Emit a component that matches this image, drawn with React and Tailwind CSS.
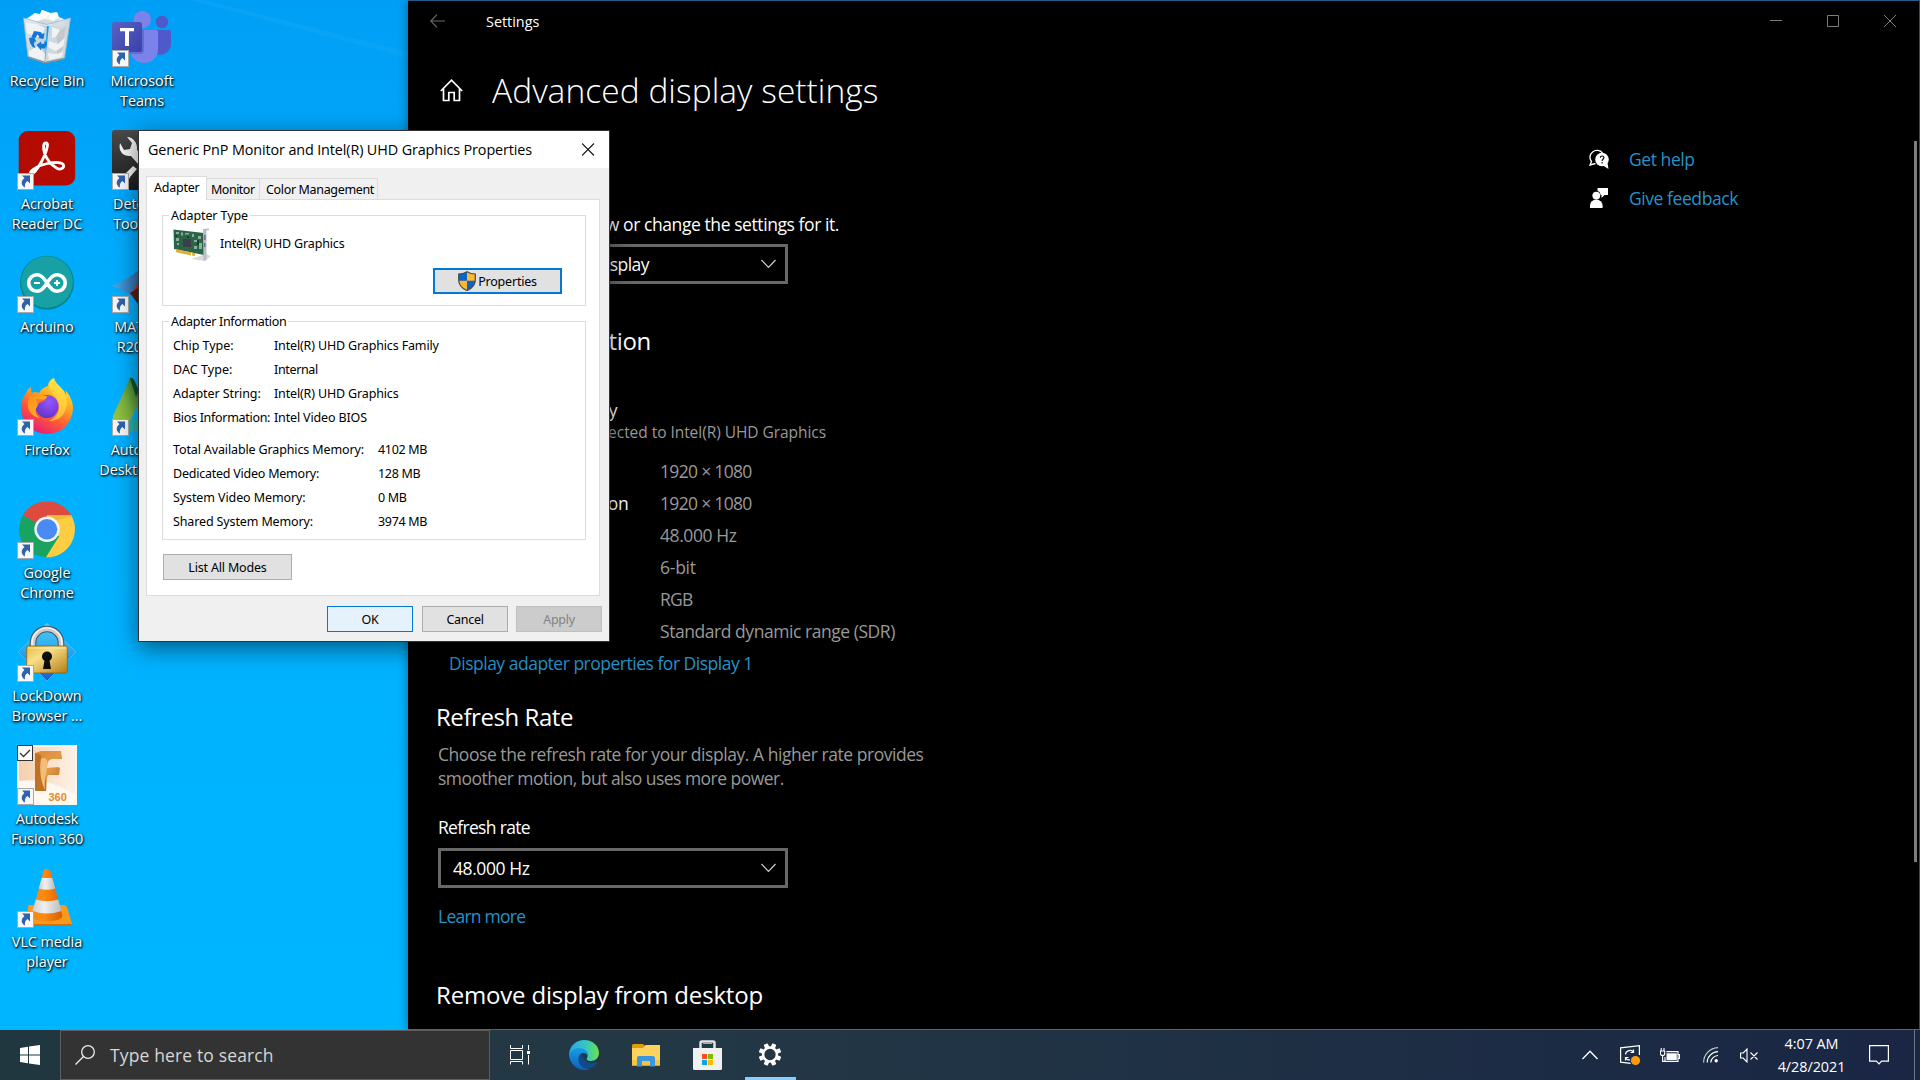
import React from "react";

/* ---------- desktop icon artwork (60 x 60) ---------- */

function Art({ children }) {
  return (
    <svg width="60" height="60" viewBox="0 0 60 60" className="block">
      {children}
    </svg>
  );
}

function RecycleBinArt() {
  return (
    <Art>
      <defs>
        <linearGradient id="binL" x1="0" y1="0" x2="1" y2="1">
          <stop offset="0" stopColor="#e9eef2" />
          <stop offset="1" stopColor="#c3c8cc" />
        </linearGradient>
      </defs>
      <path d="M9 12l9-6 5 1 2-4 8 3 7-1 2 5 7 3-3 6H13z" fill="#f2f2f2" />
      <path d="M18 6l7 5-6 4-8-3zM25 3l8 3-5 6-5-4zM34 7l7-1-4 8-5-3z" fill="#fff" />
      <path d="M19 15l9-3 8 2 7-3-3 6H20z" fill="#d6d8da" />
      <path d="M6.5 11l23.500 7L28 55l-17-5.500z" fill="url(#binL)" opacity=".94" />
      <path d="M53.500 11L32 18l-4 37 19.500-4z" fill="#d8dbde" opacity=".95" />
      <path d="M9 16l10 1 9 4-4 10-14-5z" fill="#f7f9fa" opacity=".8" />
      <path d="M12 44l9-5 7 8-1 7-15-5z" fill="#fbfbfb" opacity=".8" />
      <path d="M35 20l8 3 6-4-5 9-9 3zM32 34l9 3 7-6-2 9-8 4-7-4zM31 46l8 1 7-4-1 7-13 3z" fill="#f3f3f3" opacity=".95" />
      <path d="M43 23l6-4-2 12-6 6-2-7zM40 44l6-5-1 6-5 2z" fill="#c4c8cb" />
      <path d="M6.500 11L30 17.500 53.500 11" fill="none" stroke="#8fc3e6" strokeWidth=".9" />
      <path d="M6.500 11l4.500 39 17 5.500L47.500 51l6-40" fill="none" stroke="#9fb6c4" strokeWidth=".8" />
      <path d="M11 49.500l17 5.500 19.500-4v1.500L28 56.500 11 51z" fill="#8d9296" />
      <g fill="#1479d6">
        <path d="M14.500 30l2.500-6 6.500 1 2 2 2-1-1 6-5.500-1 1.500-1-2-2.500-2.500 4z" />
        <path d="M12 31l5-1 2.500 5-2-.5-.5 3 1.500 3.500-3-1-2.500-4z" />
        <path d="M19.500 38l4.500-3.500v2l3 .500 1-4 2 4-2 4.500-4 0v2z" />
      </g>
    </Art>
  );
}

function TeamsArt() {
  return (
    <Art>
      <defs>
        <linearGradient id="tmBox" x1="0" y1="0" x2="1" y2="1">
          <stop offset="0" stopColor="#5a62c3" />
          <stop offset="1" stopColor="#3940ab" />
        </linearGradient>
      </defs>
      <circle cx="50" cy="15" r="6.200" fill="#5059c9" />
      <path d="M44 23h13a2 2 0 0 1 2 2v12a11 11 0 0 1-15 10z" fill="#5059c9" />
      <circle cx="30.300" cy="12.500" r="8.700" fill="#7b83eb" />
      <path d="M18 23h26a2 2 0 0 1 2 2v17a14 14 0 0 1-28 0z" fill="#7b83eb" />
      <path d="M18 23h14v20a4 4 0 0 1-4 4H18z" fill="#4a50a8" opacity=".45" />
      <rect x="0" y="15" width="30" height="30" rx="2.500" fill="url(#tmBox)" />
      <path d="M8 21h14v3.300h-5V39h-4V24.300H8z" fill="#fff" />
    </Art>
  );
}

function AcrobatArt() {
  return (
    <Art>
      <rect x="1.700" y="1" width="56.500" height="54.500" rx="9" fill="#b30b00" />
      <path
        d="M29 13c-3 0-3 5-1.500 10 2 6 7 12 12 15 4 2.500 8 0 7-3-1-3-9-3-16-1.500-7 1.500-14 5-16.500 8-2 3 1 4 4 0 4-5 9-14 11-20 1.500-5 2.500-8.500 0-8.500z"
        fill="none"
        stroke="#fff"
        strokeWidth="2.800"
        strokeLinejoin="round"
      />
    </Art>
  );
}

function WrenchArt() {
  return (
    <Art>
      <defs>
        <linearGradient id="wr" x1="0" y1="0" x2="0" y2="1">
          <stop offset="0" stopColor="#4a4a4a" />
          <stop offset="1" stopColor="#1c1c1c" />
        </linearGradient>
      </defs>
      <rect x="0" y="0" width="60" height="60" rx="3" fill="url(#wr)" />
      <path d="M8 13c-2 8 3 14 11 13l22 25 6-6-22-25c1-7-4-13-10-13l5 6-2 6-6 1z" fill="#f4f4f4" />
      <path d="M14 43l7-7 4 3-7 8c-1 3-3 4-5 4l-2-2c0-3 1-5 3-6z" fill="#f4f4f4" />
    </Art>
  );
}

function ArduinoArt() {
  return (
    <Art>
      <circle cx="30" cy="29.700" r="27" fill="#00878f" />
      <circle cx="30" cy="29" r="25.800" fill="#17a1a5" />
      <path
        d="M30 30c-3-5-6-8.300-10-8.300a8.300 8.300 0 0 0 0 16.600c4 0 7-3.300 10-8.300s6-8.300 10-8.300a8.300 8.300 0 0 1 0 16.600c-4 0-7-3.300-10-8.300z"
        fill="none"
        stroke="#fff"
        strokeWidth="3.600"
      />
      <path d="M17 30h6M37 30h6M40 27v6" stroke="#fff" strokeWidth="1.800" />
    </Art>
  );
}

function MatlabArt() {
  return (
    <Art>
      <defs>
        <linearGradient id="ml" x1="0" y1="0" x2="1" y2="0">
          <stop offset="0" stopColor="#4aa9e8" />
          <stop offset="1" stopColor="#2b5f9e" />
        </linearGradient>
        <linearGradient id="mr" x1="0" y1="0" x2="0" y2="1">
          <stop offset="0" stopColor="#6b1a1f" />
          <stop offset=".6" stopColor="#c0392b" />
          <stop offset="1" stopColor="#f6a21b" />
        </linearGradient>
      </defs>
      <path d="M0 33l19-10 8-6 5 14-13 11z" fill="url(#ml)" />
      <path d="M18 40c6-3 8-14 14-25 4-7 8-8 12 4l14 30c-8-6-14-4-22 8-4-6-9-12-18-17z" fill="url(#mr)" />
      <path d="M18 40l8-5v16z" fill="#5d1a1d" />
    </Art>
  );
}

function FirefoxArt() {
  return (
    <Art>
      <defs>
        <linearGradient id="ffA" x1=".8" y1="0" x2=".25" y2="1">
          <stop offset="0" stopColor="#fff44f" />
          <stop offset=".35" stopColor="#ffab1f" />
          <stop offset=".65" stopColor="#ff5a36" />
          <stop offset="1" stopColor="#e5147f" />
        </linearGradient>
        <radialGradient id="ffB" cx=".6" cy=".3" r=".8">
          <stop offset="0" stopColor="#9059ff" />
          <stop offset=".6" stopColor="#7a3bdc" />
          <stop offset="1" stopColor="#4a3fb8" />
        </radialGradient>
        <linearGradient id="ffC" x1="0" y1="0" x2="1" y2="1">
          <stop offset="0" stopColor="#ff8a16" />
          <stop offset="1" stopColor="#ffbd2e" />
        </linearGradient>
      </defs>
      <path
        d="M31 10C31 6 34 3 37 2c1 5 5 7 8 11 2 1 3 4 4 6 0-2 0-3-1-5 5 5 8 12 8 18a26 26 0 0 1-52 0c0-7 3-12 5-15 1-3 3-5 5-6 0 2 0 4 1 6 2-1 5-1 7 0 2-4 5-6 9-7z"
        fill="url(#ffA)"
      />
      <path d="M37 2c1 5 5 7 8 11 6 8 6 16 3 22-3 7-9 10-16 10 9-4 12-12 9-20-2-5-7-8-9-13 0-4 2-8 5-10z" fill="#ffe14a" opacity=".65" />
      <circle cx="30" cy="30.500" r="11.500" fill="url(#ffB)" />
      <path d="M15 17c3-1 6-1 8 1 3 2 5 2 7 2 0 3-3 4-6 5-3 2-3 4-4 6-3 3-1 9 3 11-9-1-13-9-12-16 0-4 2-7 4-9z" fill="url(#ffC)" />
      <path d="M19 23c3 0 7 0 10 1-2 2-6 2-9 5z" fill="#ff6a28" opacity=".7" />
    </Art>
  );
}

function AutodeskArt() {
  return (
    <Art>
      <defs>
        <linearGradient id="ad" x1="1" y1="0" x2="0" y2="1">
          <stop offset="0" stopColor="#1d6b35" />
          <stop offset=".5" stopColor="#7cb342" />
          <stop offset="1" stopColor="#a6ce39" />
        </linearGradient>
      </defs>
      <path d="M18 2q2-1 4 2l8 16L13 56 1 50V40z" fill="url(#ad)" />
      <path d="M18 2q2-1 4 2l5 11-3 6z" fill="#12502c" />
      <path d="M14 44h20l10 12H16z" fill="#25b3ad" />
    </Art>
  );
}

function ChromeArt() {
  return (
    <Art>
      <path d="M30 30.300L5.800 16.300A28 28 0 0 1 54.200 16.300z" fill="#dd4b3e" />
      <path d="M30 30.300V16.300h24.200A28 28 0 0 1 29 58.300z" fill="#ffcd41" />
      <path d="M30 30.300L42.100 37.300 29 58.300A28 28 0 0 1 5.800 16.300l12.100 21z" fill="#1aa260" />
      <path d="M5.800 16.300L18 37.300l12-7z" fill="#1aa260" />
      <path d="M30 16.300h24.200L55 18l-20 4z" fill="#d9a92a" opacity=".45" />
      <circle cx="30" cy="30.300" r="12.700" fill="#f4f4f4" />
      <circle cx="30" cy="30.300" r="10.300" fill="#4a8af4" />
    </Art>
  );
}

function LockArt() {
  return (
    <Art>
      <defs>
        <linearGradient id="ld" x1="0" y1="0" x2="0" y2="1">
          <stop offset="0" stopColor="#4fd0f7" />
          <stop offset=".5" stopColor="#2aa4ec" />
          <stop offset="1" stopColor="#1c5bd0" />
        </linearGradient>
        <linearGradient id="lb" x1="0" y1="0" x2="1" y2="1">
          <stop offset="0" stopColor="#e8b93a" />
          <stop offset=".35" stopColor="#f8e08a" />
          <stop offset="1" stopColor="#b47c14" />
        </linearGradient>
      </defs>
      <path d="M30 1l29 29-29 29L1 30z" fill="url(#ld)" stroke="#5bc8f5" strokeWidth=".6" />
      <path d="M16 26v-5a14 14 0 0 1 28 0v5" fill="none" stroke="#4b4f55" strokeWidth="6.500" />
      <path d="M16 26v-5a14 14 0 0 1 28 0v5" fill="none" stroke="#c9ced4" strokeWidth="4.500" />
      <path d="M15 26v-5a15 15 0 0 1 30 0v5" fill="none" stroke="#fff" strokeWidth="1.200" />
      <rect x="9.700" y="24" width="40.600" height="27" rx="2" fill="url(#lb)" stroke="#8a5f10" strokeWidth=".8" />
      <path d="M11 26h38" stroke="#fbeeb4" strokeWidth="1.200" />
      <circle cx="30" cy="34.500" r="5" fill="#0c0c0c" />
      <path d="M28 36h4l2 11h-8z" fill="#0c0c0c" />
    </Art>
  );
}

function FusionArt() {
  return (
    <Art>
      <defs>
        <linearGradient id="fb" x1="0" y1="0" x2="1" y2="0">
          <stop offset="0" stopColor="#f3cfae" />
          <stop offset="1" stopColor="#fdf1e6" />
        </linearGradient>
        <linearGradient id="ff" x1="0" y1="0" x2="1" y2="1">
          <stop offset="0" stopColor="#d98a3c" />
          <stop offset=".5" stopColor="#e39a45" />
          <stop offset="1" stopColor="#b8651c" />
        </linearGradient>
      </defs>
      <rect width="60" height="60" fill="#fdf6ef" />
      <rect x="2" y="2" width="56" height="56" fill="url(#fb)" />
      <path d="M2 36q30-4 56 14v8H2z" fill="#fff8f1" />
      <path d="M18 8l6-2h20l1 8-10 0c-4 1-5 4-5 9l11-1 2 1-1 7H31c-2 4-1 9-2 16H18z" fill="url(#ff)" />
      <path d="M18 8l6 2c0 12 6 10 5 36H18z" fill="#b8641e" opacity=".75" />
      <path d="M24 14c4-3 8 0 6 9-1 8-3 14-2 22-4-8-6-20-4-31z" fill="#f1bd78" />
      <text x="31.500" y="55.500" fontSize="11" fontFamily="Liberation Sans, sans-serif" fontWeight="bold" fill="#e28b2d">
        360
      </text>
    </Art>
  );
}

function VlcArt() {
  return (
    <Art>
      <defs>
        <linearGradient id="vo" x1="0" y1="0" x2="1" y2="0">
          <stop offset="0" stopColor="#f08a1c" />
          <stop offset=".4" stopColor="#ff8a10" />
          <stop offset="1" stopColor="#d95e00" />
        </linearGradient>
        <linearGradient id="vw" x1="0" y1="0" x2="1" y2="0">
          <stop offset="0" stopColor="#c9cdd0" />
          <stop offset=".4" stopColor="#f0f0f0" />
          <stop offset="1" stopColor="#b9bcbf" />
        </linearGradient>
      </defs>
      <path d="M12 37h36l2 2 5 17-1 2H10l-1-2 2-17z" fill="#fb9a1a" />
      <path d="M9.500 56h45.500l-.5 2H10z" fill="#d86f00" />
      <path d="M27 1.500q3-1.200 6 0L45.500 48q-1 5-15.500 5t-15.500-5z" fill="url(#vo)" />
      <path d="M24.700 10h10.600l3 10.500q-8.300 2.500-16.600 0z" fill="url(#vw)" />
      <path d="M18.700 31.500q11.300 3.500 22.600 0L44.500 43q-14.500 5-29 0z" fill="url(#vw)" />
    </Art>
  );
}

/* ---------- desktop shortcuts ---------- */

const COL1 = [
  { lines: ["Recycle Bin"], art: RecycleBinArt, plain: true },
  { lines: ["Acrobat", "Reader DC"], art: AcrobatArt },
  { lines: ["Arduino"], art: ArduinoArt },
  { lines: ["Firefox"], art: FirefoxArt },
  { lines: ["Google", "Chrome"], art: ChromeArt },
  { lines: ["LockDown", "Browser ..."], art: LockArt },
  { lines: ["Autodesk", "Fusion 360"], art: FusionArt, checked: true },
  { lines: ["VLC media", "player"], art: VlcArt },
];

const COL2 = [
  { lines: ["Microsoft", "Teams"], art: TeamsArt },
  { lines: ["Detector", "Tool Box"], art: WrenchArt },
  { lines: ["MATLAB", "R2020b"], art: MatlabArt },
  { lines: ["Autodesk", "Desktop App"], art: AutodeskArt },
];

function Shortcut({ item }) {
  const Pic = item.art;
  return (
    <div className="flex h-[123px] w-[94px] flex-col items-center">
      <div className="relative size-[60px]">
        <Pic />
        {!item.plain && (
          <svg className="absolute bottom-0 left-0" width="17" height="17" viewBox="0 0 17 17">
            <rect x=".5" y=".5" width="16" height="16" fill="#f7f7f7" stroke="#a9a9a9" />
            <path d="M5 2.500h8v8l-2.500-2.500C8 9.500 7.500 12 8 14.500 4 12.500 3.500 8 7.500 5z" fill="#2f62a8" />
          </svg>
        )}
        {item.checked && (
          <svg className="absolute left-0 top-0" width="16" height="16" viewBox="0 0 16 16">
            <rect x=".5" y=".5" width="15" height="15" fill="#fff" stroke="#333" />
            <path d="M3 8l3.500 3.500L13 5" fill="none" stroke="#333" strokeWidth="1.300" />
          </svg>
        )}
      </div>
      <div className="mt-1 text-center text-[14.4px] leading-5 tracking-[-0.05px] text-white [text-shadow:1px_1px_2px_#000,0_1px_3px_rgba(0,0,0,0.8)]">
        {item.lines.map((l) => (
          <div key={l} className="whitespace-nowrap">{l}</div>
        ))}
      </div>
    </div>
  );
}

/* ---------- settings window ---------- */

function Select({ children, className }) {
  return (
    <div className="flex h-10 w-[350px] items-center justify-between border-[3px] border-[#686868] pl-3 pr-[9px] text-[17.5px] leading-6 text-white">
      <span className={className}>{children}</span>
      <svg width="15" height="10" viewBox="0 0 15 10">
        <path d="M.5 1L7.500 8.300 14.500 1" fill="none" stroke="#cfcfcf" strokeWidth="1.200" />
      </svg>
    </div>
  );
}

const INFO = [
  ["Desktop resolution", "1920 × 1080", "tracking-[-0.68px]"],
  ["Active signal resolution", "1920 × 1080", "tracking-[-0.68px]"],
  ["Refresh rate (Hz)", "48.000 Hz", "tracking-[-0.42px]"],
  ["Bit depth", "6-bit", "tracking-[-0.25px]"],
  ["Color format", "RGB", "tracking-[-0.7px]"],
  ["Color space", "Standard dynamic range (SDR)", "tracking-[-0.45px]"],
];

function SettingsWindow() {
  return (
    <div className="absolute left-[408px] top-0 flex h-[1030px] w-[1512px] flex-col border-b border-r border-t border-b-[#1f7a93] border-r-[#2c4a7c] border-t-[#235a86] bg-black text-white shadow-[0_0_10px_rgba(0,0,0,0.4)]">
      <div className="flex h-10 shrink-0 items-center pl-[22px] pr-[23px]">
        <svg width="15" height="14" viewBox="0 0 15 14" fill="none" stroke="#6a6a6a" strokeWidth="1.100">
          <path d="M15 7H1M7 .700L.800 7 7 13.300" />
        </svg>
        <span className="ml-[41px] pt-0.5 text-[14.4px] leading-5">Settings</span>
        <svg className="ml-auto" width="127" height="14" viewBox="0 0 127 14" fill="none" stroke="#7c7c7c">
          <path d="M1 6.500h12M58.500 1.500h11v11h-11zM115 1l12 12M127 1l-12 12" />
        </svg>
      </div>

      <div className="flex min-h-0 flex-1">
        <div className="w-[560px] shrink-0 pl-7 pt-[25px] tracking-[-0.42px]">
          <div className="flex h-12 items-center">
            <svg className="ml-1" width="23" height="23" viewBox="0 0 23 23" fill="none" stroke="#fff" strokeWidth="1.700">
              <path d="M.800 12L11.500 1.200 22.200 12M3.500 9.500v12h5.300v-8h5.400v8h5.300v-12" />
            </svg>
            <h1 className="ml-[29px] whitespace-nowrap text-[33.5px] font-[350] leading-[48px] tracking-[0.05px]">Advanced display settings</h1>
          </div>
          <div className="ml-0.5">
            <div className="mt-[98px] w-[401px] whitespace-nowrap text-[17.5px] leading-6">
              <div className="flex justify-end">Select a display to view or change the settings for it.</div>
            </div>
            <div className="mt-2">
              <Select className="tracking-[-0.52px]">Display 1: Internal Display</Select>
            </div>
          </div>
          <h2 className="mt-[41px] flex w-[215px] justify-end whitespace-nowrap text-[24px] leading-8 tracking-[-0.3px]">Display information</h2>
          <div className="mt-[41px] flex w-[181px] justify-end whitespace-nowrap text-[17.5px] leading-6">Internal Display</div>
          <div className="flex w-[390px] justify-end whitespace-nowrap text-[15.5px] leading-5 tracking-[-0.05px] text-[#999]">
            Display 1: Connected to Intel(R) UHD Graphics
          </div>
          <div className="ml-[13px] mt-[13px] text-[17.5px] leading-8">
            {INFO.map(([k, v, t]) => (
              <div key={k} className="flex">
                <span className="w-[211px] whitespace-nowrap tracking-[-0.35px]">{k}</span>
                <span className={"whitespace-nowrap text-[#999] " + t}>{v}</span>
              </div>
            ))}
            <a className="block whitespace-nowrap tracking-[-0.49px] text-[#2593ca]">Display adapter properties for Display 1</a>
          </div>
          <h2 className="mt-[22px] text-[24px] leading-8 tracking-[-0.44px]">Refresh Rate</h2>
          <div className="ml-0.5 text-[17.5px] leading-6">
            <p className="mt-[9px] whitespace-nowrap text-[#999]">
              <span className="tracking-[-0.45px]">Choose the refresh rate for your display. A higher rate provides</span>
              <br />
              <span className="tracking-[-0.53px]">smoother motion, but also uses more power.</span>
            </p>
            <div className="mt-[25px] tracking-[-0.68px]">Refresh rate</div>
            <div className="mt-[9px]">
              <Select className="tracking-[-0.42px]">48.000 Hz</Select>
            </div>
            <a className="mt-4 block tracking-[-0.75px] text-[#2593ca]">Learn more</a>
          </div>
          <h2 className="mt-[51px] whitespace-nowrap text-[24px] leading-8 tracking-[-0.18px]">Remove display from desktop</h2>
        </div>

        <div className="ml-[621px] pt-[98px] text-[17.5px] tracking-[-0.43px] text-[#2593ca]">
          <div className="flex h-[39px] items-center gap-5">
            <svg width="20" height="20" viewBox="0 0 20 20">
              <path d="M6.500 14.500L1 16l1.500-3.500A7 6.800 0 1 1 13.500 4" fill="none" stroke="#fff" strokeWidth="1.300" />
              <circle cx="13" cy="10.500" r="6.800" fill="#fff" />
              <path d="M14 16.500l5.500 3.500-1-6z" fill="#fff" />
              <path d="M11.300 8.800c0-2.400 3.600-2.300 3.600-.2 0 1.600-1.800 1.700-1.800 3.300M13.100 13v1.400" fill="none" stroke="#000" strokeWidth="1.100" />
            </svg>
            <span className="whitespace-nowrap pt-0.5">Get help</span>
          </div>
          <div className="flex h-[39px] items-center gap-5">
            <svg width="20" height="20" viewBox="0 0 20 20" fill="#fff">
              <path d="M8.500 0h10.500v7h-3.500l-3 3V7h-.8a5 5 0 0 0-3.200-4.200z" />
              <circle cx="7.300" cy="7.600" r="3.900" />
              <path d="M1 20v-2.500a6.300 6 0 0 1 12.600 0V20z" />
            </svg>
            <span className="whitespace-nowrap pt-0.5">Give feedback</span>
          </div>
        </div>
        <div className="ml-auto mr-0.5 mt-[100px] h-[721px] w-[3px] shrink-0 bg-[#7d7d7d]" />
      </div>
    </div>
  );
}

/* ---------- adapter properties dialog ---------- */

function Button({ children, className }) {
  return (
    <button className={"flex h-[26px] items-center justify-center whitespace-nowrap " + className}>
      {children}
    </button>
  );
}

function Group({ title, className, titleClass, children }) {
  return (
    <div className={"ml-[15px] w-[424px] border border-[#dcdcdc] " + className}>
      <div className={"-mt-[9px] ml-1.5 h-[18px] w-fit bg-white px-0.5 leading-[18px] " + titleClass}>{title}</div>
      {children}
    </div>
  );
}

const ADAPTER = [
  ["Chip Type:", "Intel(R) UHD Graphics Family", "tracking-[-0.05px]", "tracking-[-0.15px]"],
  ["DAC Type:", "Internal", "tracking-[0.05px]", "tracking-[-0.35px]"],
  ["Adapter String:", "Intel(R) UHD Graphics", "tracking-[-0.08px]", "tracking-[-0.15px]"],
  ["Bios Information:", "Intel Video BIOS", "tracking-[-0.3px]", "tracking-[-0.15px]"],
];

const MEMORY = [
  ["Total Available Graphics Memory:", "4102 MB", "tracking-[-0.13px]"],
  ["Dedicated Video Memory:", "128 MB", "tracking-[-0.23px]"],
  ["System Video Memory:", "0 MB", "tracking-[-0.1px]"],
  ["Shared System Memory:", "3974 MB", "tracking-[-0.13px]"],
];

function GraphicsCard() {
  return (
    <svg width="38" height="34" viewBox="0 0 38 34">
      <path d="M18 31l15-5 5 2-6 5z" fill="#d9dcd9" />
      <path d="M.5 1.500L31 5v22L1 21z" fill="#2c6449" />
      <path d="M3 21.300l15 3v3.200l-15-3.300z" fill="#e0b13a" />
      <path d="M19 24.500l3 .7v3l-3-.6z" fill="#e0b13a" />
      <rect x="10" y="11" width="8" height="8" fill="#3b3f48" />
      <path d="M3 4h3v2H3zM8 4.500h2v3H8zM12 5h4v1.500h-4zM19 6h2v3h-2zM3 10h3v3H3zM4 15h2v2H4zM21 12h3v2h-3zM25 8h3v3h-3zM21 18h3v3h-3zM26 15h3v6h-3z" fill="#9fc4ae" opacity=".8" />
      <path d="M24 12h2v5h-2zM2 7.500h2v1.500H2zM14 8h2v2h-2z" fill="#173c2a" />
      <path d="M30 1l6-.5V2l-2.500.5V32l-3 .8z" fill="#b9bdc9" />
      <path d="M31 7h1.500v5H31zM31 15h1.500v4H31z" fill="#6f7482" />
    </svg>
  );
}

function Shield() {
  return (
    <svg width="18" height="20" viewBox="0 0 18 20">
      <path d="M9 .500C6.500 2 3.500 3 .700 3v6c0 5 3.500 8.500 8.300 10.500 4.800-2 8.300-5.500 8.300-10.500V3C14.500 3 11.500 2 9 .500z" fill="#fdb82c" />
      <path d="M9 .500C6.500 2 3.500 3 .700 3v6.800H9zM9 9.800h8.300C17 14.500 13.500 17.700 9 19.500z" fill="#0c63c8" />
      <path d="M9 .700C6.500 2.200 3.500 3 .700 3v6c0 5 3.500 8.500 8.300 10.500 4.800-2 8.300-5.500 8.300-10.500V3C14.500 3 11.500 2.200 9 .700z" fill="none" stroke="#4a4a4a" strokeWidth="1.200" />
    </svg>
  );
}

function PropertiesDialog() {
  return (
    <div className="absolute left-[138px] top-[130px] flex h-[512px] w-[472px] flex-col border border-[#333] bg-[#f0f0f0] text-black shadow-[0_6px_22px_rgba(0,0,0,0.5)]">
      <div className="flex h-[37px] shrink-0 items-center justify-between bg-white pl-[9px] pr-[14px]">
        <span className="whitespace-nowrap text-[14.4px] leading-5 tracking-[-0.128px]">
          Generic PnP Monitor and Intel(R) UHD Graphics Properties
        </span>
        <svg width="13" height="13" viewBox="0 0 13 13">
          <path d="M0 .500l12 12M12 .500l-12 12" stroke="#111" strokeWidth="1.100" />
        </svg>
      </div>

      <div className="px-[7px] pt-2 font-['Noto_Sans',sans-serif] text-[12.5px] leading-[18px] tracking-[-0.3px]">
        <div className="flex h-[23px] items-end">
          <div className="relative z-10 -mb-px h-6 w-[61px] border border-b-0 border-[#dcdcdc] bg-white pl-[7px] pt-0.5 tracking-[-0.25px]">Adapter</div>
          <div className="-ml-px h-[21px] w-[54px] border border-b-0 border-[#dcdcdc] pl-1 pt-0.5 tracking-[-0.5px]">Monitor</div>
          <div className="-ml-px h-[21px] w-[119px] border border-b-0 border-[#dcdcdc] pl-1.5 pt-0.5 tracking-[-0.34px]">Color Management</div>
        </div>
        <div className="h-[397px] w-[454px] border border-[#dcdcdc] bg-white pt-[15px]">
          <Group title="Adapter Type" className="h-[91px]" titleClass="tracking-[-0.1px]">
            <div className="flex h-[37px] items-start pl-[10px]">
              <div className="mt-[3px]"><GraphicsCard /></div>
              <span className="ml-[9px] mt-[10px] tracking-[-0.15px]">Intel(R) UHD Graphics</span>
            </div>
            <div className="mt-1.5 flex justify-end pr-[23px]">
              <Button className="w-[129px] border-2 border-[#0078d7] bg-[#e1e1e1] text-black">
                <Shield />
                <span className="ml-0.5 pt-0.5 tracking-[-0.2px]">Properties</span>
              </Button>
            </div>
          </Group>
          <Group title="Adapter Information" className="mt-[15px] h-[219px]" titleClass="tracking-[-0.3px]">
            <div className="pl-[10px] pt-[3px] leading-6">
              {ADAPTER.map(([k, v, t, u]) => (
                <div key={k} className="flex">
                  <span className={"w-[101px] whitespace-nowrap " + t}>{k}</span>
                  <span className={"whitespace-nowrap " + u}>{v}</span>
                </div>
              ))}
              <div className="mt-2">
                {MEMORY.map(([k, v, t]) => (
                  <div key={k} className="flex">
                    <span className={"w-[205px] whitespace-nowrap " + t}>{k}</span>
                    <span className="whitespace-nowrap tracking-[-0.33px]">{v}</span>
                  </div>
                ))}
              </div>
            </div>
          </Group>
          <Button className="ml-4 mt-[14px] w-[129px] border border-[#adadad] bg-[#e1e1e1] pt-0.5 tracking-[-0.18px]">List All Modes</Button>
        </div>
        <div className="mt-[10px] flex justify-end">
          <Button className="w-[86px] border border-[#0078d7] bg-[#e5f1fb] pt-0.5">OK</Button>
          <Button className="ml-[9px] w-[86px] border border-[#adadad] bg-[#e1e1e1] pt-0.5">Cancel</Button>
          <Button className="ml-2 w-[86px] border border-[#bfbfbf] bg-[#cccccc] pt-0.5 text-[#838383]">Apply</Button>
        </div>
      </div>
    </div>
  );
}

/* ---------- taskbar ---------- */

function Edge() {
  return (
    <svg width="30" height="30" viewBox="0 0 30 30">
      <defs>
        <linearGradient id="eA" x1="0" y1="0" x2="1" y2="0">
          <stop offset="0" stopColor="#2aa8e6" />
          <stop offset=".55" stopColor="#34c6c6" />
          <stop offset="1" stopColor="#6fe04b" />
        </linearGradient>
        <linearGradient id="eB" x1="0" y1="0" x2="0" y2="1">
          <stop offset="0" stopColor="#1b9de2" />
          <stop offset="1" stopColor="#0c5cc0" />
        </linearGradient>
      </defs>
      <path d="M0 14C1 5 8 0 15 0c9 0 15 6 15 13 0 5-4 8-8 8-4 0-5-2-4-3 2-3 0-9-7-9C6 9 2 12 0 14z" fill="url(#eA)" />
      <path d="M0 14c2-4 6-6 10-6 6 0 9 4 9 8-1-2-3-3-5-3-5 1-7 9 0 14 2 2 5 2 7 2-10 4-21-4-21-15z" fill="url(#eB)" />
      <path d="M13 13c-4 3-5 9 1 14 6 4 12 0 14-4 1-1 0-2-1-1-7 3-13-1-14-9z" fill="#0f4a8c" />
    </svg>
  );
}

function Taskbar() {
  return (
    <div className="absolute bottom-0 left-0 flex h-[50px] w-[1920px] items-center bg-gradient-to-r from-[#20373f] via-[#233845] via-35% to-[#1a2644] text-white">
      <div className="flex h-full w-[60px] items-center justify-center">
        <svg width="20" height="20" viewBox="0 0 20 20" fill="#fff">
          <path d="M0 2.900L8 1.700v7.800H0zM9 1.500L20 0v9.500H9zM0 10.500h8v7.800l-8-1.200zM9 10.500h11V20L9 18.500z" />
        </svg>
      </div>
      <div className="flex h-full w-[430px] items-center border border-[#5d5d5d] bg-[#333] pl-[14px]">
        <svg width="20" height="20" viewBox="0 0 20 20" fill="none" stroke="#eee" strokeWidth="1.300">
          <circle cx="13" cy="7" r="6.300" />
          <path d="M8.500 11.500L.500 19.500" />
        </svg>
        <span className="ml-[15px] text-[17.5px] leading-6 tracking-[0.14px] text-[#d6d6d6]">Type here to search</span>
      </div>
      <svg className="ml-5 overflow-visible" width="19" height="20" viewBox="0 0 19 20" fill="none" stroke="#fff">
        <path d="M.5 0v3.500h12V0M.5 5.500h12v9H.5zM.5 19.500v-3h12v3M18.500 0v5M18.500 10v9.500" />
        <rect x="17" y="6" width="3" height="3" fill="#fff" stroke="none" />
      </svg>
      <div className="ml-10"><Edge /></div>
      <svg className="ml-[33px]" width="28" height="24" viewBox="0 0 28 24">
        <path d="M0 2.500A1.500 1.500 0 0 1 1.500 1H11l2 2-2 3H0z" fill="#e39b06" />
        <path d="M0 5h11l2.500-3H28v20.500H0z" fill="#ffd35c" />
        <path d="M0 17h28v5.500H0z" fill="#f5c344" />
        <path d="M5 23.500V15a2 2 0 0 1 2-2h14a2 2 0 0 1 2 2v8.500h-5V18h-8v5.500z" fill="#3c96dc" />
      </svg>
      <svg className="ml-[33px]" width="29" height="30" viewBox="0 0 29 30">
        <path d="M7.500 11V3A1.500 1.500 0 0 1 9 1.500h11A1.500 1.500 0 0 1 21.500 3v8" fill="none" stroke="#e3e3e3" strokeWidth="2.500" />
        <path d="M10 2h9v2h-9z" fill="#aaa" />
        <path d="M0 8h29v20.500a1.500 1.500 0 0 1-1.500 1.500h-26A1.500 1.500 0 0 1 0 28.500z" fill="#f0f0f0" />
        <path d="M9 14h5v5H9z" fill="#f25022" />
        <path d="M15 14h5v5h-5z" fill="#7fba00" />
        <path d="M9 20h5v5H9z" fill="#00a4ef" />
        <path d="M15 20h5v5h-5z" fill="#ffb900" />
      </svg>
      <div className="ml-[23px] flex h-full w-[51px] flex-col items-center justify-between border-b-[3px] border-[#85ceff] pt-[13px]">
        <svg className="-ml-[2px]" width="24" height="23" viewBox="-12 -11.500 24 23">
          <g fill="#fff">
            {[22.5, 67.5, 112.5, 157.5, 202.5, 247.5, 292.5, 337.5].map((a) => (
              <rect key={a} x="-2.200" y="-11.300" width="4.400" height="5" rx=".8" transform={`rotate(${a})`} />
            ))}
          </g>
          <circle r="6.900" fill="none" stroke="#fff" strokeWidth="2.500" />
        </svg>
      </div>

      <div className="ml-auto flex h-full items-center">
        <svg width="16" height="10" viewBox="0 0 16 10" fill="none" stroke="#fff" strokeWidth="1.300">
          <path d="M.5 9L8 1.200 15.500 9" />
        </svg>
        <svg className="ml-[22px] overflow-visible" width="20" height="20" viewBox="0 0 20 20" fill="none" stroke="#fff" strokeWidth="1.200">
          <path d="M19.400 10V.700L.6 2.800V17.200l10 1.200" />
          <path d="M5.500 9.500a4.500 4 0 0 1 7.500-3M13.500 4.500v3h-3M10 14.800a4.500 4 0 0 1-4-1.300M5.500 15.500v-3h3" />
          <circle cx="15.500" cy="15.500" r="4.600" fill="#ff9a0a" stroke="none" />
        </svg>
        <svg className="ml-5" width="20" height="15" viewBox="0 0 20 15" fill="none" stroke="#fff" strokeWidth="1.100">
          <path d="M5 9v4.400h13V3.600H6.500M18.500 6.500h1v4h-1" />
          <path d="M6.500 5.300h10.300v6.700H6.500z" fill="#fff" stroke="none" />
          <path d="M1.200 0v2.500M4 0v2.500M.5 3h4.200v2.500a2 2 0 0 1-4.200 0zM2.600 7.500V13.400H5" />
        </svg>
        <svg className="ml-[23px]" width="15" height="16" viewBox="0 0 15 16" fill="none" stroke="#fff" strokeWidth="1.200">
          <path d="M.6 15.500A15 15 0 0 1 15 .600" opacity=".75" />
          <path d="M4.200 15.500A11 11 0 0 1 15 4.700" />
          <path d="M7.800 15.500A7.500 7.500 0 0 1 15 8.500" />
          <circle cx="13.200" cy="13.800" r="1.700" fill="#fff" stroke="none" />
        </svg>
        <svg className="ml-[22px]" width="19" height="15" viewBox="0 0 19 15" fill="none" stroke="#fff" strokeWidth="1.100">
          <path d="M.6 5h2.600L7 1v13L3.200 10H.600zM10.500 4.500l7 7M17.500 4.500l-7 7" />
        </svg>
        <div className="ml-[19px] w-[67px] whitespace-nowrap text-center text-[14.4px] leading-[23px]">
          <div className="tracking-[-0.05px]">4:07 AM</div>
          <div className="-ml-1 w-[75px] tracking-[-0.05px]">4/28/2021</div>
        </div>
        <svg className="ml-6" width="20" height="20" viewBox="0 0 20 20" fill="none" stroke="#fff" strokeWidth="1.200">
          <path d="M.6.600h18.800v15.500h-6.800L10 18.800 7.400 16.100H.600z" />
        </svg>
        <div className="ml-[25px] mr-[5px] h-[50px] w-px bg-[#6d7488]" />
      </div>
    </div>
  );
}

export default function App() {
  return (
    <div className="relative h-[1080px] w-[1920px] overflow-hidden bg-gradient-to-b from-[#009ff6] via-[#00b0ff] via-35% to-[#00b6ff] font-['Open_Sans','Noto_Sans',sans-serif]">
      <svg className="absolute left-0 top-0" width="408" height="130">
        <path d="M190 0L408 58v-6L205 0z" fill="#2ab4fb" opacity=".2" />
      </svg>
      <div className="flex gap-[1px] pt-[7px]">
        <div className="flex flex-col">
          {COL1.map((it) => (
            <Shortcut key={it.lines.join(" ")} item={it} />
          ))}
        </div>
        <div className="flex flex-col">
          {COL2.map((it) => (
            <Shortcut key={it.lines.join(" ")} item={it} />
          ))}
        </div>
      </div>
      <SettingsWindow />
      <PropertiesDialog />
      <Taskbar />
    </div>
  );
}
